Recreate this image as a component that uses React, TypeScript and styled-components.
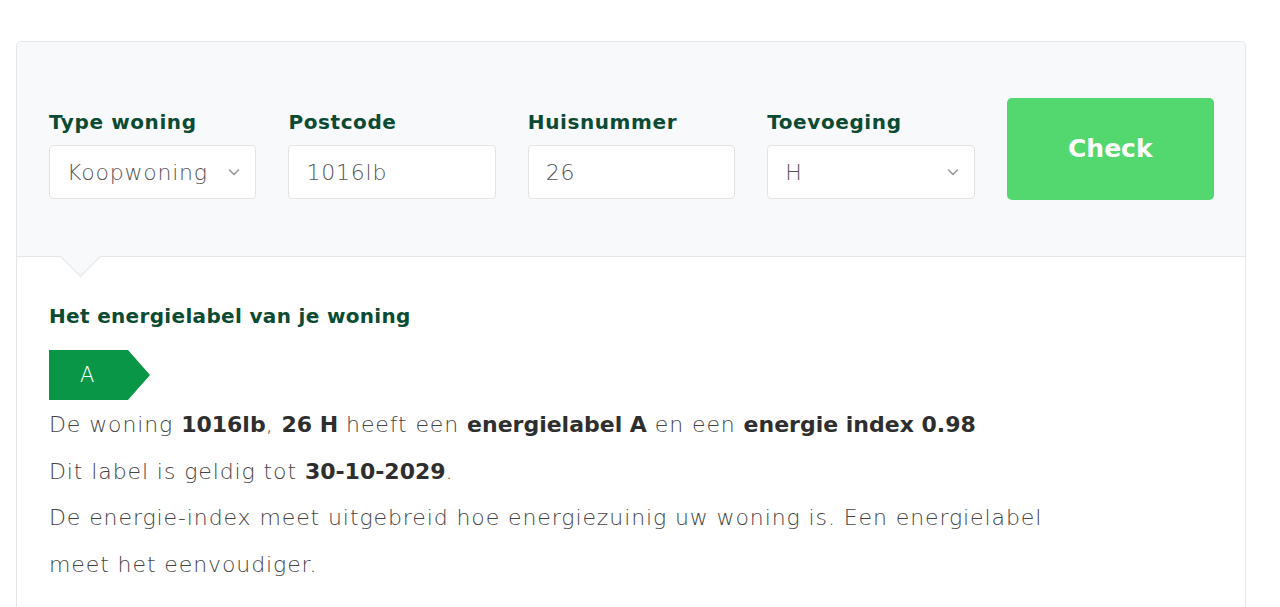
import React from 'react';
import styled, { createGlobalStyle } from 'styled-components';

const GlobalStyle = createGlobalStyle`
  body {
    margin: 0;
    background: #ffffff;
    font-family: "DejaVu Sans", sans-serif;
  }
`;

const Page = styled.div`
  padding: 41px 34px 0 16px;
  height: 607px;
  box-sizing: border-box;
  overflow: hidden;
`;

const Card = styled.div`
  border: 1px solid #e4e6e8;
  border-radius: 5px;
  background: #ffffff;
  min-height: 620px;
`;

const SearchBar = styled.form`
  position: relative;
  display: grid;
  grid-template-columns: repeat(5, 1fr);
  gap: 32px;
  align-items: end;
  padding: 56px 31px 57px 32px;
  background: #f8f9fa;
  border-bottom: 1px solid #e4e6e8;
  border-radius: 5px 5px 0 0;
`;

const Pointer = styled.span`
  position: absolute;
  left: 49px;
  bottom: -15px;
  width: 28px;
  height: 28px;
  background: #f8f9fa;
  border-right: 1px solid #e4e6e8;
  border-bottom: 1px solid #e4e6e8;
  transform: rotate(45deg);
`;

const Field = styled.label`
  display: flex;
  flex-direction: column;
`;

const FieldLabel = styled.span`
  font-size: 20px;
  font-weight: 700;
  line-height: 24px;
  letter-spacing: 0.6px;
  color: #0b4b33;
  margin-bottom: 11px;
`;

const Box = styled.div`
  display: flex;
  align-items: center;
  justify-content: space-between;
  height: 54px;
  box-sizing: border-box;
  padding: 0 14px 0 17px;
  background: #ffffff;
  border: 1px solid #e2e4e6;
  border-radius: 4px;
  font-size: 22px;
  font-weight: 200;
  letter-spacing: 0.8px;
  color: #555555;
`;

const CheckButton = styled.button`
  height: 102px;
  margin-bottom: -1px;
  border: none;
  border-radius: 5px;
  background: #53d76f;
  color: #ffffff;
  font-family: inherit;
  font-size: 25px;
  font-weight: 700;
  cursor: pointer;
  padding-bottom: 2px;
`;

const Result = styled.section`
  padding: 47px 32px 0 32px;
`;

const Heading = styled.h3`
  margin: 0 0 22px 0;
  font-size: 20px;
  line-height: 24px;
  font-weight: 700;
  letter-spacing: 0.33px;
  color: #0b4b33;
`;

const Badge = styled.div<{ $color: string }>`
  width: 101px;
  height: 50px;
  margin-bottom: 2px;
  display: flex;
  align-items: center;
  padding-left: 31px;
  box-sizing: border-box;
  background: ${(p) => p.$color};
  clip-path: polygon(0 0, 79px 0, 101px 50%, 79px 100%, 0 100%);
  color: #ffffff;
  font-size: 21px;
  font-weight: 200;
`;

const Text = styled.p`
  margin: 0;
  max-width: 1025px;
  font-size: 22px;
  line-height: 46.7px;
  font-weight: 200;
  letter-spacing: 0.9px;
  color: #444444;

  b {
    font-weight: 700;
    letter-spacing: 0;
    color: #2e2e2e;
  }
`;

const Chevron = () => (
  <svg width="14" height="14" viewBox="0 0 14 14" fill="none">
    <polyline points="2.5,5 7,9.5 11.5,5" stroke="#9a9a9a" strokeWidth="1.6" strokeLinecap="round" strokeLinejoin="round" />
  </svg>
);

const fields = [
  { label: 'Type woning', value: 'Koopwoning', select: true },
  { label: 'Postcode', value: '1016lb', select: false },
  { label: 'Huisnummer', value: '26', select: false },
  { label: 'Toevoeging', value: 'H', select: true },
];

export default function App() {
  return (
    <>
      <GlobalStyle />
      <Page>
        <Card>
          <SearchBar onSubmit={(e) => e.preventDefault()}>
            {fields.map((f) => (
              <Field key={f.label}>
                <FieldLabel>{f.label}</FieldLabel>
                <Box>
                  <span>{f.value}</span>
                  {f.select && <Chevron />}
                </Box>
              </Field>
            ))}
            <CheckButton type="submit">Check</CheckButton>
            <Pointer />
          </SearchBar>
          <Result>
            <Heading>Het energielabel van je woning</Heading>
            <Badge $color="#0a9647">A</Badge>
            <Text>
              De woning <b>1016lb</b>, <b>26 H</b> heeft een <b>energielabel A</b> en een <b>energie index 0.98</b>
            </Text>
            <Text>
              Dit label is geldig tot <b>30-10-2029</b>.
            </Text>
            <Text>
              De energie-index meet uitgebreid hoe energiezuinig uw woning is. Een energielabel meet het eenvoudiger.
            </Text>
          </Result>
        </Card>
      </Page>
    </>
  );
}
